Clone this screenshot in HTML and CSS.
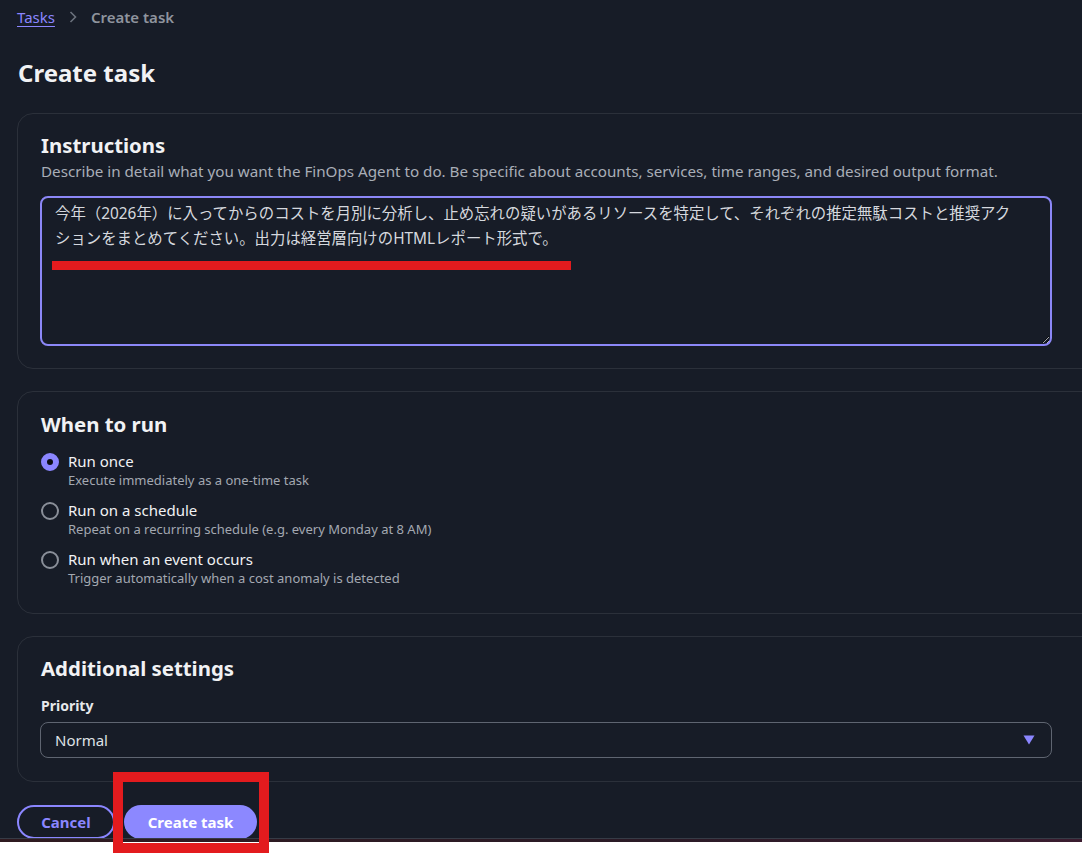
FILE: index.html
```html
<!DOCTYPE html>
<html lang="ja">
<head>
    <meta charset="UTF-8">
    <title>Create task</title>
    <link rel="stylesheet" href="styles.css">
</head>
<body>
    <div class="page">
        <nav class="breadcrumb">
            <a href="#" class="crumb-link">Tasks</a>
            <svg class="crumb-sep" width="10" height="14" viewBox="0 0 10 14"><path d="M2.5 2 L7.5 7 L2.5 12" fill="none" stroke="currentColor" stroke-width="1.6"/></svg>
            <span class="crumb-current">Create task</span>
        </nav>

        <h1>Create task</h1>

        <section class="card">
            <h2>Instructions</h2>
            <p class="hint">Describe in detail what you want the FinOps Agent to do. Be specific about accounts, services, time ranges, and desired output format.</p>
            <textarea class="instructions">今年（2026年）に入ってからのコストを月別に分析し、止め忘れの疑いがあるリソースを特定して、それぞれの推定無駄コストと推奨アクションをまとめてください。出力は経営層向けのHTMLレポート形式で。</textarea>
        </section>

        <section class="card card-run">
            <h2>When to run</h2>
            <div class="options">
                <label class="option">
                    <span class="radio checked"></span>
                    <span class="option-text">
                        <span class="option-title">Run once</span>
                        <span class="option-desc">Execute immediately as a one-time task</span>
                    </span>
                </label>
                <label class="option">
                    <span class="radio"></span>
                    <span class="option-text">
                        <span class="option-title">Run on a schedule</span>
                        <span class="option-desc">Repeat on a recurring schedule (e.g. every Monday at 8 AM)</span>
                    </span>
                </label>
                <label class="option">
                    <span class="radio"></span>
                    <span class="option-text">
                        <span class="option-title">Run when an event occurs</span>
                        <span class="option-desc">Trigger automatically when a cost anomaly is detected</span>
                    </span>
                </label>
            </div>
        </section>

        <section class="card card-settings">
            <h2>Additional settings</h2>
            <div class="field-label">Priority</div>
            <div class="select">
                <span>Normal</span>
                <svg width="12" height="10" viewBox="0 0 12 10"><path d="M0.5 0.5 H11.5 L6 9.5 Z" fill="#8b86ff"/></svg>
            </div>
        </section>

        <div class="actions">
            <button class="btn btn-cancel">Cancel</button>
            <button class="btn btn-primary">Create task</button>
        </div>
    </div>
    <div class="page-edge"></div>

    <div class="mark-underline"></div>
    <div class="mark-box"></div>
</body>
</html>
```

FILE: styles.css
```css
body {
    margin: 0;
    background: #ffffff;
    font-family: "Noto Sans", "Noto Sans CJK JP", sans-serif;
    overflow: hidden;
    position: relative;
    height: 855px;
}

.page {
    height: 839px;
    background: #171c27;
    padding: 0 0 0 17px;
    overflow: hidden;
    border-bottom: 1px solid #363b46;
    box-sizing: border-box;
    color: #f1f2f4;
}

.page-edge {
    height: 3px;
    background: linear-gradient(90deg, #2f1a20, #2a1a26 60%, #3a1c2f);
}

.breadcrumb {
    display: flex;
    align-items: center;
    height: 33px;
    font-size: 15px;
}

.crumb-link {
    color: #8b86ff;
    text-decoration: underline;
    text-underline-offset: 3px;
}

.crumb-sep {
    color: #6b717c;
    margin: 0 13px 0 13px;
}

.crumb-current {
    color: #8f949e;
    font-weight: 600;
}

h1 {
    margin: 20px 0 0 1px;
    font-size: 24px;
    line-height: 40px;
    font-weight: 700;
}

.card {
    width: 1100px;
    margin-top: 20px;
    border: 1px solid #2b303a;
    border-radius: 16px;
    padding: 19px 22px 22px 23px;
    box-sizing: border-box;
}

.card + .card {
    margin-top: 22px;
}

.card-run {
    padding: 20px 22px 26px 23px;
}

.card-settings {
    padding-bottom: 23px;
}

h2 {
    margin: 0;
    font-size: 20.4px;
    line-height: 24px;
    font-weight: 700;
}

.hint {
    margin: 4px 0 0;
    font-size: 15.2px;
    line-height: 20px;
    color: #a9aeb7;
}

.instructions {
    display: block;
    width: 1012px;
    height: 150px;
    margin: 15px 0 0 -1px;
    box-sizing: border-box;
    background: #171c27;
    border: 2px solid #8c87f7;
    border-radius: 8px;
    padding: 3px 30px 8px 13px;
    font-family: "Noto Sans", "Noto Sans CJK JP", sans-serif;
    font-size: 15.4px;
    line-height: 25px;
    color: #d5d8de;
    outline: none;
}

.options {
    display: flex;
    flex-direction: column;
    gap: 11px;
    margin-top: 15px;
}

.option {
    display: flex;
    align-items: flex-start;
    gap: 9px;
}

.radio {
    width: 18px;
    height: 18px;
    margin-top: 2px;
    box-sizing: border-box;
    border: 2px solid #8a8f99;
    border-radius: 50%;
    flex-shrink: 0;
}

.radio.checked {
    border: 6px solid #8b86ff;
    background: #0b0d12;
}

.option-text {
    display: flex;
    flex-direction: column;
}

.option-title {
    font-size: 15px;
    line-height: 20px;
    color: #f1f2f4;
}

.option-desc {
    font-size: 13px;
    line-height: 18px;
    color: #a3a8b1;
}

.field-label {
    margin-top: 16px;
    font-size: 14px;
    line-height: 20px;
    font-weight: 700;
    color: #e6e8eb;
}

.select {
    width: 1012px;
    height: 36px;
    margin: 6px 0 0 -1px;
    box-sizing: border-box;
    border: 1px solid #5f6571;
    border-radius: 8px;
    padding: 0 16px 0 14px;
    display: flex;
    align-items: center;
    justify-content: space-between;
    font-size: 15px;
    color: #dfe2e6;
}

.actions {
    display: flex;
    gap: 9px;
    margin-top: 23px;
}

.btn {
    height: 34px;
    border-radius: 17px;
    font-family: "Noto Sans", sans-serif;
    font-size: 15px;
    font-weight: 700;
    cursor: pointer;
}

.btn-cancel {
    width: 98px;
    background: transparent;
    border: 2px solid #8b86ff;
    color: #8b86ff;
}

.btn-primary {
    width: 133px;
    background: #8c88ff;
    border: none;
    color: #ffffff;
}

.mark-underline {
    position: absolute;
    left: 52px;
    top: 261px;
    width: 519px;
    height: 9px;
    background: #e31b1e;
}

.mark-box {
    position: absolute;
    left: 113px;
    top: 772px;
    width: 156px;
    height: 81px;
    box-sizing: border-box;
    border: 10px solid #e31b1e;
}
```
